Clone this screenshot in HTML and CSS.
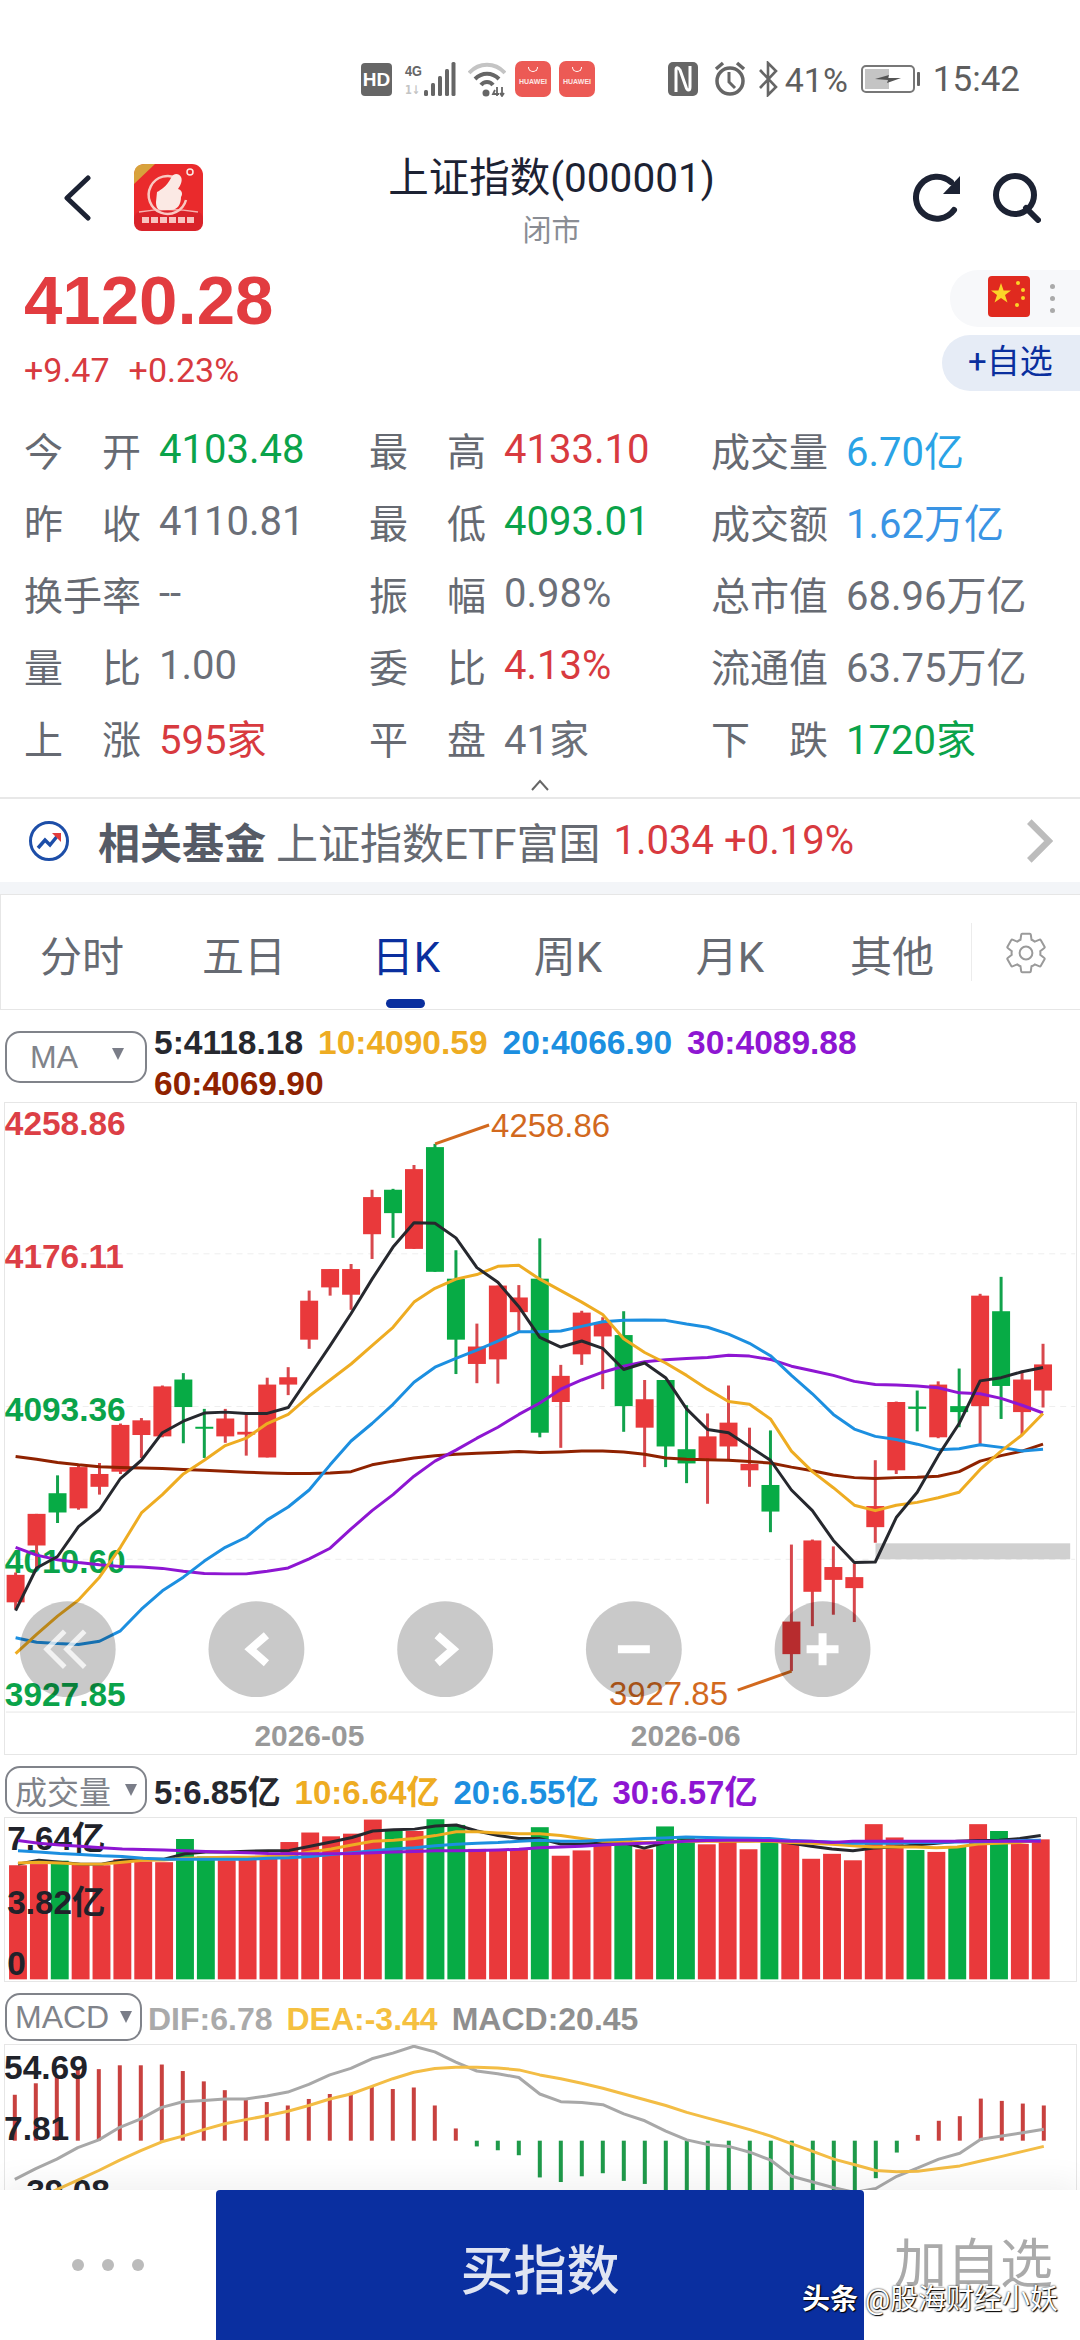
FILE: index.html
```html
<!DOCTYPE html>
<html lang="zh-CN">
<head>
    <meta charset="UTF-8">
    <meta name="viewport" content="width=device-width, initial-scale=1.0">
    <title>上证指数</title>
    <link rel="stylesheet" href="styles.css">
</head>
<body>
    <div class="status-bar">
        <span class="hd-badge">HD</span>
        <svg class="sb-signal" viewBox="0 0 52 36">
            <text x="1" y="15" class="sb-4g" textLength="17" lengthAdjust="spacingAndGlyphs">4G</text>
            <text x="1" y="33" class="sb-1" textLength="15" lengthAdjust="spacingAndGlyphs">1↓</text>
            <rect x="20" y="29" width="4" height="6" rx="1.500" fill="#666"/><rect x="27" y="22" width="4" height="13" rx="1.500" fill="#666"/>
            <rect x="34" y="15" width="4" height="20" rx="1.500" fill="#666"/><rect x="41" y="8" width="4" height="27" rx="1.500" fill="#666"/><rect x="47.500" y="1" width="4" height="34" rx="1.500" fill="#666"/>
        </svg>
        <svg class="sb-wifi" viewBox="0 0 38 36" fill="none">
            <path d="M1 12C11 1 27 1 37 12" stroke="#c4c4c4" stroke-width="4"/>
            <path d="M7 18C14 11 24 11 31 18" stroke="#666" stroke-width="4"/>
            <path d="M13 24C16 20 22 20 25 24" stroke="#666" stroke-width="4"/>
            <circle cx="18" cy="32" r="3.500" fill="#666"/>
            <path d="M27 29L25 33H31M29 26V35M34 26V35M32 32L34 35L36 32" stroke="#666" stroke-width="1.800"/>
        </svg>
        <span class="hw-icon"><i></i>HUAWEI</span>
        <span class="hw-icon hw-icon-second"><i></i>HUAWEI</span>
        <svg class="sb-nfc" viewBox="0 0 32 36" fill="none">
            <rect x="1" y="1" width="30" height="34" rx="5" fill="#666"/>
            <path d="M9 31V9C9 6 11 6 13 9L19 26C20 30 23 30 23 26V5" stroke="#fff" stroke-width="3"/>
        </svg>
        <svg class="sb-alarm" viewBox="0 0 34 36" fill="none" stroke="#666">
            <circle cx="17" cy="20" r="13" stroke-width="3.500"/>
            <path d="M16 11v10l6 6" stroke-width="3"/>
            <path d="M3 8L10 2M31 8L24 2" stroke-width="3.500"/>
        </svg>
        <svg class="sb-bt" viewBox="0 0 20 36" fill="none">
            <path d="M2 9L18 26L10 34V2L18 10L2 27" stroke="#666" stroke-width="2.600"/>
        </svg>
        <span class="sb-text sb-percent">41%</span>
        <svg class="sb-battery" viewBox="0 0 60 28" fill="none">
            <rect x="1" y="1" width="52" height="26" rx="4" stroke="#777" stroke-width="2"/>
            <rect x="4" y="4" width="24" height="20" fill="#c4c4c4"/>
            <path d="M14 14L28 10L27 13H40L26 18L27 15Z" fill="#555"/>
            <rect x="56" y="7" width="3" height="14" rx="1" fill="#666"/>
        </svg>
        <span class="sb-text sb-time">15:42</span>
    </div>

    <header class="top-bar">
        <div class="top-left">
            <svg class="back-icon" viewBox="0 0 30 46" fill="none"><path d="M26 3L5 23L26 43" stroke="#1c2233" stroke-width="5" stroke-linecap="round" stroke-linejoin="round"/></svg>
            <svg class="app-logo" viewBox="0 0 69 67">
                <rect width="69" height="67" rx="11" fill="#ea2a2c"/>
                <rect y="47" width="69" height="20" rx="8" fill="#d9232a"/>
                <path d="M5 48Q34 43 64 48" fill="none" stroke="#f6b0ae" stroke-width="1.500"/>
                <path d="M0 20V11Q0 0 11 0H21Z" fill="#d8a23c"/>
                <path d="M44 15A19 19 0 1 0 52 36" fill="none" stroke="#f9c9c2" stroke-width="2.500"/>
                <path d="M23 28C27 26 33 22 37 14C39 9 45 9 47 13C49 17 46 22 44 25C48 26 49 30 47 33C47 40 44 46 36 46H27C23 46 22 42 22 38Z" fill="#fbe9e4"/>
                <circle cx="56" cy="8" r="3" fill="none" stroke="#fbe9e4" stroke-width="1.500"/>
                <path d="M8 56H61" stroke="#f8c4c0" stroke-width="6" stroke-dasharray="7 2"/>
            </svg>
        </div>
        <div class="top-title">
            <h1>上证指数(000001)</h1>
            <p>闭市</p>
        </div>
        <div class="top-right">
            <svg class="refresh-icon" viewBox="0 0 50 50" fill="none">
                <path d="M41 37A21 21 0 1 1 38 9" stroke="#1c2233" stroke-width="6" stroke-linecap="round"/>
                <path d="M47 3V21H30Z" fill="#1c2233"/>
            </svg>
            <svg class="search-icon" viewBox="0 0 48 50" fill="none">
                <circle cx="22" cy="22" r="19" stroke="#1c2233" stroke-width="6"/>
                <path d="M33 35L45 47" stroke="#1c2233" stroke-width="6" stroke-linecap="round"/>
            </svg>
        </div>
    </header>

    <section class="price-row">
        <div class="price-main">
            <div class="price">4120.28</div>
            <div class="price-change"><span>+9.47</span><span>+0.23%</span></div>
        </div>
        <div class="price-side">
            <div class="flag-pill">
                <svg class="flag" viewBox="0 0 42 41">
                    <rect width="42" height="41" rx="4" fill="#e02a1f"/>
                    <polygon points="13,7 15.600,14.500 23,14.500 17,19 19.500,26.500 13,22 6.500,26.500 9,19 3,14.500 10.400,14.500" fill="#fbd428"/>
                    <circle cx="30" cy="7" r="2" fill="#fbd428"/><circle cx="35" cy="14" r="2" fill="#fbd428"/>
                    <circle cx="35" cy="22" r="2" fill="#fbd428"/><circle cx="29" cy="29" r="2" fill="#fbd428"/>
                </svg>
                <span class="flag-dots"><i></i><i></i><i></i></span>
            </div>
            <div class="follow-pill">+自选</div>
        </div>
    </section>

    <section class="stats">
        <div class="stat"><label>今开</label><b class="green">4103.48</b></div>
        <div class="stat"><label>最高</label><b class="red">4133.10</b></div>
        <div class="stat"><label>成交量</label><b class="sky">6.70亿</b></div>
        <div class="stat"><label>昨收</label><b>4110.81</b></div>
        <div class="stat"><label>最低</label><b class="green">4093.01</b></div>
        <div class="stat"><label>成交额</label><b class="azure">1.62万亿</b></div>
        <div class="stat"><label>换手率</label><b>--</b></div>
        <div class="stat"><label>振幅</label><b>0.98%</b></div>
        <div class="stat"><label>总市值</label><b>68.96万亿</b></div>
        <div class="stat"><label>量比</label><b>1.00</b></div>
        <div class="stat"><label>委比</label><b class="red">4.13%</b></div>
        <div class="stat"><label>流通值</label><b>63.75万亿</b></div>
        <div class="stat"><label>上涨</label><b class="red">595家</b></div>
        <div class="stat"><label>平盘</label><b>41家</b></div>
        <div class="stat"><label>下跌</label><b class="green">1720家</b></div>
    </section>

    <div class="collapse">
        <svg viewBox="0 0 20 12" fill="none"><path d="M2 11L10 2L18 11" stroke="#666" stroke-width="2"/></svg>
    </div>

    <section class="fund-row">
        <svg class="fund-icon" viewBox="0 0 42 42" fill="none">
            <circle cx="21" cy="21" r="18.500" stroke="#1d4ea8" stroke-width="3"/>
            <path d="M10 28L17 20L22 25L31 14" stroke="#1d4ea8" stroke-width="3.500"/>
            <path d="M24 13H33V22Z" fill="#e23b3b"/>
        </svg>
        <strong>相关基金</strong>
        <span class="fund-name">上证指数ETF富国</span>
        <span class="fund-price">1.034 +0.19%</span>
        <svg class="fund-arrow" viewBox="0 0 26 40" fill="none"><path d="M4 2L22 20L4 38" stroke="#bcbcbc" stroke-width="6"/></svg>
    </section>
    <div class="strip"></div>

    <nav class="tabs">
        <div class="tab-list">
            <a>分时</a>
            <a>五日</a>
            <a class="active">日K</a>
            <a>周K</a>
            <a>月K</a>
            <a>其他</a>
        </div>
        <div class="tab-gear">
            <svg viewBox="0 0 24 24" fill="none" stroke="#9a9a9a" stroke-width="1">
                <path d="M19.140 12.940c.04-.3.06-.61.06-.94 0-.32-.02-.64-.07-.94l2.030-1.580c.18-.14.23-.41.12-.61l-1.920-3.320c-.12-.22-.37-.29-.59-.22l-2.390.96c-.5-.38-1.030-.7-1.620-.94l-.36-2.540c-.04-.24-.24-.41-.48-.41h-3.840c-.24 0-.43.17-.47.41l-.36 2.540c-.59.24-1.130.57-1.620.94l-2.390-.96c-.22-.08-.47 0-.59.22L2.740 8.870c-.12.21-.08.47.12.61l2.030 1.580c-.05.3-.09.63-.09.94s.02.64.07.94l-2.030 1.580c-.18.14-.23.41-.12.61l1.920 3.320c.12.22.37.29.59.22l2.390-.96c.5.38 1.030.7 1.620.94l.36 2.540c.05.24.24.41.48.41h3.840c.24 0 .44-.17.47-.41l.36-2.540c.59-.24 1.130-.56 1.620-.94l2.390.96c.22.08.47 0 .59-.22l1.920-3.320c.12-.22.07-.47-.12-.61l-2.010-1.580z"/>
                <circle cx="12" cy="12" r="3.200"/>
            </svg>
        </div>
    </nav>

    <section class="chart-head chart-head-main">
        <div class="select-pill"><span>MA</span><i></i></div>
        <div class="legend legend-wrap">
            <span class="c-black">5:4118.18</span>
            <span class="c-orange">10:4090.59</span>
            <span class="c-blue">20:4066.90</span>
            <span class="c-purple">30:4089.88</span>
            <span class="c-brown">60:4069.90</span>
        </div>
    </section>
    <div class="panel panel-main"><svg id="kline" viewBox="5 0 1071 652"></svg></div>

    <section class="chart-head">
        <div class="select-pill"><span>成交量</span><i></i></div>
        <div class="legend">
            <span class="c-black">5:6.85亿</span>
            <span class="c-orange">10:6.64亿</span>
            <span class="c-blue">20:6.55亿</span>
            <span class="c-purple">30:6.57亿</span>
        </div>
    </section>
    <div class="panel panel-volume"><svg id="volume" viewBox="5 0 1071 164"></svg></div>

    <section class="chart-head chart-head-macd">
        <div class="select-pill select-macd"><span>MACD</span><i></i></div>
        <div class="legend legend-macd">
            <span class="c-dif">DIF:6.78</span>
            <span class="c-dea">DEA:-3.44</span>
            <span class="c-macd">MACD:20.45</span>
        </div>
    </section>
    <div class="panel panel-macd"><svg id="macd" viewBox="5 0 1071 145"></svg></div>

    <footer class="bottom-nav">
        <div class="more-dots"><i></i><i></i><i></i></div>
        <button class="buy-btn">买指数</button>
        <div class="add-btn">加自选</div>
    </footer>
    <div class="watermark"><b>头条</b> @股海财经小妖</div>

    <script src="chart.js"></script>
</body>
</html>
```

FILE: styles.css
```css
* {
    box-sizing: border-box;
}
html, body {
    margin: 0;
    padding: 0;
}
body {
    width: 1080px;
    height: 2340px;
    overflow: hidden;
    position: relative;
    background: #fff;
    font-family: Roboto, "Noto Sans CJK SC", sans-serif;
    color: #6b6f78;
}
h1, p {
    margin: 0;
    font-weight: 400;
}
svg {
    display: block;
}

/* status bar */
.status-bar {
    height: 150px;
    padding: 61px 60px 0 361px;
    display: flex;
    align-items: flex-start;
}
.hd-badge {
    width: 31px;
    height: 33px;
    margin-top: 2px;
    background: #666;
    border-radius: 4px;
    color: #fff;
    font: bold 19px/33px "Liberation Sans", sans-serif;
    text-align: center;
}
.sb-signal {
    width: 52px;
    height: 36px;
    margin-left: 12px;
}
.sb-4g {
    font: bold 15px "Liberation Sans", sans-serif;
    fill: #666;
}
.sb-1 {
    font: bold 12px "DejaVu Sans", sans-serif;
    fill: #c4c4c4;
}
.sb-wifi {
    width: 38px;
    height: 36px;
    margin-left: 12px;
}
.hw-icon {
    width: 36px;
    height: 36px;
    margin-left: 9px;
    padding-top: 16px;
    background: #ec5a55;
    border-radius: 7px;
    color: #fde6e4;
    font: bold 7px/10px "Liberation Sans", sans-serif;
    text-align: center;
    position: relative;
}
.hw-icon i {
    position: absolute;
    left: 13px;
    top: 6px;
    width: 10px;
    height: 5px;
    border: 1px solid #fff;
    border-top: none;
    border-radius: 0 0 6px 6px;
}
.hw-icon-second {
    margin-left: 8px;
}
.sb-nfc {
    width: 32px;
    height: 36px;
    margin-left: auto;
}
.sb-alarm {
    width: 34px;
    height: 36px;
    margin-left: 14px;
}
.sb-bt {
    width: 20px;
    height: 36px;
    margin-left: 11px;
}
.sb-text {
    color: #5e5e5e;
    line-height: 38px;
}
.sb-percent {
    font-size: 34px;
    margin-left: 7px;
}
.sb-battery {
    width: 60px;
    height: 28px;
    margin: 4px 0 0 13px;
}
.sb-time {
    font-size: 35px;
    margin-left: 12px;
}

/* header */
.top-bar {
    height: 112px;
    padding: 7px 39px 0 62px;
    display: grid;
    grid-template-columns: 1fr auto 1fr;
}
.top-left {
    display: flex;
    align-items: flex-start;
}
.back-icon {
    width: 30px;
    height: 46px;
    margin-top: 18px;
}
.app-logo {
    width: 69px;
    height: 67px;
    margin: 7px 0 0 42px;
}
.top-title {
    text-align: center;
}
.top-title h1 {
    font-size: 40.500px;
    line-height: 42px;
    color: #1c2233;
}
.top-title p {
    margin-top: 16px;
    font-size: 29px;
    line-height: 32px;
    color: #8a8d94;
}
.top-right {
    display: flex;
    justify-content: flex-end;
    align-items: flex-start;
    padding-top: 16px;
    gap: 30px;
}
.refresh-icon {
    width: 50px;
    height: 50px;
}
.search-icon {
    width: 48px;
    height: 50px;
}

/* price */
.price-row {
    height: 151px;
    padding-left: 24px;
    display: flex;
    justify-content: space-between;
}
.price {
    margin-top: 4px;
    font: bold 69px/70px "Liberation Sans", sans-serif;
    color: #e23c40;
}
.price-change {
    margin-top: 14px;
    display: flex;
    gap: 19px;
    font-size: 34px;
    line-height: 40px;
    color: #d83a3f;
}
.price-side {
    width: 138px;
    padding-top: 8px;
    display: flex;
    flex-direction: column;
    align-items: flex-end;
    gap: 8px;
}
.flag-pill {
    width: 130px;
    height: 57px;
    padding: 6px 0 0 38px;
    background: #f7f8fa;
    border-radius: 28px 0 0 28px;
    display: flex;
}
.flag {
    width: 42px;
    height: 41px;
}
.flag-dots {
    margin: 8px 0 0 20px;
    display: flex;
    flex-direction: column;
    gap: 7px;
}
.flag-dots i {
    width: 5px;
    height: 5px;
    background: #aaa;
    border-radius: 50%;
}
.follow-pill {
    width: 138px;
    height: 56px;
    padding-left: 26px;
    background: #e6ecf6;
    border-radius: 28px 0 0 28px;
    color: #0a2f9e;
    font-size: 33px;
    line-height: 54px;
}

/* quote table */
.stats {
    padding-left: 24px;
    display: grid;
    grid-template-columns: 345px 342px 1fr;
    grid-auto-rows: 72px;
}
.stat {
    display: flex;
    align-items: center;
    gap: 18px;
    font-size: 39px;
}
.stat label {
    width: 117px;
    text-align-last: justify;
    color: #666a72;
}
.stat b {
    font-weight: 400;
    font-size: 40px;
    white-space: nowrap;
}
.green {
    color: #0aa34a;
}
.red {
    color: #d83a3f;
}
.sky {
    color: #2aa3e6;
}
.azure {
    color: #3a94e4;
}

.collapse {
    height: 24px;
    display: flex;
    justify-content: center;
    align-items: center;
}
.collapse svg {
    width: 20px;
    height: 12px;
}

/* related fund */
.fund-row {
    height: 85px;
    padding-left: 28px;
    border-top: 2px solid #e8e8e8;
    display: flex;
    align-items: center;
    font-size: 42px;
    color: #666a72;
}
.fund-icon {
    width: 42px;
    height: 42px;
    margin-right: 28px;
}
.fund-row strong {
    color: #565b66;
    margin-right: 10px;
}
.fund-price {
    margin-left: 13px;
    font-size: 40px;
    color: #d83a3f;
}
.fund-arrow {
    width: 28px;
    height: 44px;
    margin-left: auto;
    margin-right: 27px;
}
.strip {
    height: 12px;
    background: #f3f5f8;
}

/* period tabs */
.tabs {
    height: 116px;
    border: 1px solid #e6e6e6;
    border-width: 1px 0 1px 1px;
    display: flex;
}
.tab-list {
    width: 971px;
    display: grid;
    grid-template-columns: repeat(6, 162px);
}
.tab-list a {
    padding-top: 29px;
    text-align: center;
    font-size: 42px;
    line-height: 68px;
    color: #666a72;
    position: relative;
}
.tab-list a.active {
    color: #0a2f9e;
}
.tab-list a.active::after {
    content: "";
    position: absolute;
    left: 61px;
    bottom: 1px;
    width: 39px;
    height: 9px;
    background: #0a2f9e;
    border-radius: 5px;
}
.tab-gear {
    flex: 1;
    margin: 28px 0 28px -1px;
    padding: 6px 0 0 30px;
    border-left: 1px solid #ececec;
}
.tab-gear svg {
    width: 48px;
    height: 48px;
}

/* chart headers */
.chart-head {
    height: 62px;
    padding: 11px 0 0 5px;
    display: flex;
    align-items: flex-start;
}
.chart-head-main {
    height: 92px;
    padding-top: 21px;
}
.select-pill {
    width: 142px;
    height: 48px;
    padding-left: 8px;
    border: 2px solid #80838a;
    border-radius: 15px;
    display: flex;
    align-items: center;
    justify-content: space-between;
    font-size: 32px;
    color: #80838a;
    flex-shrink: 0;
}
.chart-head-main .select-pill {
    height: 52px;
    padding-left: 23px;
}
.select-pill span {
    font-family: "Liberation Sans", "Noto Sans CJK SC", sans-serif;
}
.select-pill i {
    margin-right: 8px;
    border-left: 6px solid transparent;
    border-right: 6px solid transparent;
    border-top: 12px solid #7a7d88;
}
.chart-head-main .select-pill i {
    margin-right: 21px;
    margin-top: -6px;
}
.select-macd {
    width: 137px;
}
.legend {
    margin: 6px 0 0 7px;
    display: flex;
    flex-wrap: wrap;
    column-gap: 14px;
    font: bold 33px/41px "Liberation Sans", "Noto Sans CJK SC", sans-serif;
}
.legend-wrap {
    width: 730px;
    margin-top: -9px;
    column-gap: 15px;
    font-size: 33.500px;
}
.legend-macd {
    margin-left: 6px;
    font-size: 32px;
}
.c-black {
    color: #26282e;
}
.c-orange {
    color: #eeac22;
}
.c-blue {
    color: #1c8fe0;
}
.c-purple {
    color: #8e16d2;
}
.c-brown {
    color: #8f2200;
}
.c-dif {
    color: #aaaaaa;
}
.c-dea {
    color: #f5c040;
}
.c-macd {
    color: #8f8f8f;
}

/* chart panels */
.panel {
    margin: 0 3px 0 4px;
    border: 1px solid #e6e6e6;
    overflow: hidden;
}
.panel svg {
    width: 1071px;
    height: 100%;
}
.panel-main {
    height: 653px;
}
.panel-volume {
    height: 165px;
}
.panel-macd {
    height: 146px;
    border-bottom: none;
}
.axis-label {
    font: bold 33.500px "Liberation Sans", "Noto Sans CJK SC", sans-serif;
}
.extreme-label {
    font: 33px "Liberation Sans", sans-serif;
    fill: #d2691e;
}
.date-label {
    font: bold 30px "Liberation Sans", sans-serif;
    fill: #999;
    text-anchor: middle;
}

/* bottom nav */
.bottom-nav {
    height: 150px;
    display: flex;
    position: relative;
    background: #fff;
    box-shadow: 0 -8px 30px rgba(0, 0, 0, 0.06);
}
.more-dots {
    width: 216px;
    display: flex;
    justify-content: center;
    align-items: center;
    gap: 18px;
}
.more-dots i {
    width: 12px;
    height: 12px;
    background: #bbb;
    border-radius: 50%;
}
.buy-btn {
    width: 648px;
    padding-top: 4px;
    border: none;
    border-radius: 4px 4px 0 0;
    background: #0a2fa0;
    color: #dfe4f2;
    font-family: inherit;
    font-size: 53px;
    font-weight: 500;
}
.add-btn {
    flex: 1;
    padding: 40px 0 0 30px;
    font-size: 53px;
    color: #aaa;
    line-height: 70px;
}
.watermark {
    position: absolute;
    left: 802px;
    top: 2282px;
    color: #fff;
    font-size: 28px;
    line-height: 36px;
    white-space: nowrap;
    text-shadow: 0 0 2px #000, 1px 1px 1px #000;
}
```

FILE: chart.js
```js
// Daily k-line data, as drawn. y values are raw sample rows, scaled to panel px below.
// [wickTop, bodyTop, bodyBottom, wickBottom, up]
const CANDLES = [
    [1205,1210,1270,1285,1],[1077,1077,1146,1195,1],[993,1032,1074,1097,0],[970,975,1065,1068,1],[966,990,1018,1035,1],
    [880,883,985,990,1],[868,873,905,955,1],[797,799,908,910,1],[770,784,844,923,0],[848,887,891,955,0],
    [848,869,908,922,1],[858,898,904,950,1],[780,795,954,954,1],[757,779,795,818,1],[590,612,697,717,1],
    [543,543,583,601,1],[532,543,599,632,1],[370,386,467,521,1],[368,370,421,475,0],[316,325,499,499,1],
    [270,277,549,549,0],[502,564,697,772,0],[662,712,750,792,1],[579,579,740,793,1],[578,605,637,680,1],
    [476,564,900,910,0],[752,776,833,933,1],[634,638,729,752,1],[648,660,690,805,1],[635,687,842,898,0],
    [785,827,889,975,1],[785,785,930,975,0],[840,936,967,1010,0],[858,908,957,1055,1],[797,878,930,958,1],
    [889,968,982,1018,1],[895,1014,1072,1117,0],[1144,1312,1383,1420,1],[1133,1135,1247,1322,1],[1148,1193,1221,1297,1],
    [1185,1215,1239,1313,1],[960,1060,1106,1140,1],[832,833,982,990,1],[808,843,848,897,0],[788,795,910,912,1],
    [760,842,855,888,0],[597,601,842,925,1],[560,635,798,870,0],[765,784,855,905,1],[706,751,808,845,1]
];

const MA = {
    '#8f2200': [952,958,965,970,974,976,977,978,980,982,984,986,988,989,989,988,985,970,962,955,950,947,945,943,941,943,942,940,940,942,947,955,958,959,960,963,966,975,983,992,998,1000,998,997,995,985,962,950,940,925],
    '#8e16d2': [1150,1167,1177,1183,1188,1192,1193,1196,1202,1207,1208,1208,1202,1195,1175,1152,1110,1070,1035,995,962,938,912,888,860,835,805,785,768,755,745,741,738,736,731,733,740,755,765,775,788,795,796,798,802,813,815,825,840,857],
    '#1c8fe0': [1347,1357,1360,1362,1355,1332,1285,1245,1215,1180,1150,1128,1090,1062,1025,970,918,880,838,790,757,738,720,700,680,680,678,668,658,655,654,655,663,670,685,705,732,775,815,860,892,908,915,925,937,935,926,932,940,936],
    '#eeac22': [1382,1340,1300,1265,1215,1150,1075,1035,990,960,928,912,880,860,820,785,750,710,670,615,585,565,555,537,535,565,590,615,642,695,725,748,775,805,832,838,870,940,985,1020,1058,1070,1058,1052,1042,1030,980,940,905,858],
    '#26282e': [1288,1195,1170,1105,1068,1000,960,900,875,857,855,858,858,845,778,710,640,565,495,442,443,475,540,572,625,692,713,700,716,762,748,780,848,893,900,930,960,1025,1070,1135,1183,1182,1085,1030,950,880,787,780,767,758]
};

const VOL_TOPS = [328,325,316,325,328,312,318,320,259,305,315,312,305,267,242,252,245,208,238,238,207,222,285,290,285,228,303,289,270,260,286,226,252,273,265,286,265,265,311,298,315,220,255,288,293,280,220,238,272,260];

const VOL_MA = {
    '#26282e': [325,315,320,325,325,315,312,312,298,293,293,291,290,289,278,267,255,238,235,233,225,222,238,250,258,258,272,272,270,268,283,268,263,263,264,264,262,270,278,285,290,283,280,275,270,265,263,262,258,250],
    '#eeac22': [322,320,322,325,325,320,315,314,310,308,307,307,305,302,293,285,275,265,262,258,250,240,240,243,245,245,250,258,265,265,268,268,265,265,265,265,265,268,270,273,277,280,280,280,282,280,272,270,268,262],
    '#1c8fe0': [290,293,297,300,303,305,310,312,312,312,312,312,310,308,305,300,295,290,285,282,277,273,270,268,265,262,265,265,262,260,258,256,254,255,256,257,258,262,265,267,270,270,270,268,268,267,266,265,263,262],
    '#8e16d2': [263,270,275,278,282,285,287,288,290,292,294,295,297,298,298,298,297,295,293,292,290,290,289,288,286,282,280,278,275,272,270,268,265,263,262,262,263,265,265,268,265,265,265,265,265,265,265,265,265,265]
};

const MACD_ZERO = 1047;
const MACD_BARS = [927,897,880,862,860,850,850,848,865,892,915,940,946,955,938,925,922,905,912,908,955,1015,1062,1072,1085,1143,1155,1140,1132,1152,1160,1180,1190,1190,1190,1190,1190,1190,1190,1190,1190,1145,1078,1032,995,983,937,943,950,955];
const DIF = [1148,1120,1095,1065,1045,1012,990,960,945,942,938,938,930,920,900,875,858,833,818,800,815,842,865,872,882,925,945,947,953,977,995,1022,1045,1057,1062,1077,1098,1140,1155,1170,1182,1172,1140,1118,1095,1080,1043,1035,1026,1017];
const DEA = [1220,1200,1175,1150,1125,1098,1073,1050,1035,1018,1003,992,982,970,955,938,925,905,885,868,858,855,855,857,862,875,885,897,910,925,940,955,973,988,1003,1018,1035,1055,1075,1095,1110,1125,1128,1127,1120,1113,1100,1088,1075,1062];

const RED = '#e9393b';
const GREEN = '#07ab45';
const slotX = i => 14.8 + 21 * i;
const kY = v => v / 2.178 - 83;
const volY = v => v / 2.613 - 78;
const macdY = v => v / 2.613 - 305;

function add(svg, tag, attrs, text) {
    const node = document.createElementNS('http://www.w3.org/2000/svg', tag);
    for (const key in attrs) node.setAttribute(key, attrs[key]);
    if (text) node.textContent = text;
    svg.appendChild(node);
    return node;
}

function line(svg, x1, y1, x2, y2, stroke, width) {
    return add(svg, 'line', { x1, y1, x2, y2, stroke, 'stroke-width': width });
}

function polyline(svg, values, toY, stroke, width) {
    const points = values.map((v, i) => slotX(i).toFixed(1) + ',' + toY(v).toFixed(1)).join(' ');
    add(svg, 'polyline', { points, stroke, fill: 'none', 'stroke-width': width, 'stroke-linejoin': 'round' });
}

function label(svg, x, y, text, fill) {
    add(svg, 'text', { x, y, fill, class: 'axis-label' }, text);
}

function drawKline(svg) {
    [151, 304, 457].forEach(y => {
        add(svg, 'line', { x1: 5, y1: y, x2: 1076, y2: y, stroke: '#eeeeee', 'stroke-width': 1, 'stroke-dasharray': '6 5' });
    });
    line(svg, 5, 610, 1076, 610, '#e6e6e6', 1);

    label(svg, 4, 32, '4258.86', '#dc3f46');
    label(svg, 4, 165, '4176.11', '#dc3f46');
    label(svg, 4, 318, '4093.36', '#0aa34a');
    label(svg, 4, 471, '4010.60', '#0aa34a');
    label(svg, 4, 604, '3927.85', '#0aa34a');

    add(svg, 'rect', { x: 876, y: 441, width: 195, height: 16, fill: '#d0d0d0' });

    CANDLES.forEach((c, i) => {
        const x = slotX(i);
        const color = c[4] ? RED : GREEN;
        line(svg, x, kY(c[0]), x, kY(c[3]), c[4] ? '#d8484d' : '#12a24c', 3);
        add(svg, 'rect', { x: x - 9, y: kY(c[1]), width: 18, height: Math.max(2, kY(c[2]) - kY(c[1])), fill: color });
    });

    for (const color in MA) polyline(svg, MA[color], kY, color, 3);

    // high and low markers
    add(svg, 'polyline', { points: '435,41 489,22', fill: 'none', stroke: '#d2691e', 'stroke-width': 3 });
    add(svg, 'text', { x: 491, y: 34, class: 'extreme-label' }, '4258.86');
    add(svg, 'polyline', { points: '792,569 738,588', fill: 'none', stroke: '#d2691e', 'stroke-width': 3 });
    add(svg, 'text', { x: 609, y: 603, class: 'extreme-label' }, '3927.85');

    // zoom and pan buttons sit over the candles
    [67, 256, 445, 634, 823].forEach(cx => {
        add(svg, 'circle', { cx, cy: 547, r: 48, fill: 'rgba(0,0,0,0.21)' });
    });
    const icon = (d, width, opacity) => add(svg, 'path', { d, fill: 'none', stroke: '#fff', 'stroke-width': width, opacity });
    icon('M64 529L46 547L64 565M84 529L66 547L84 565', 5, 0.75);
    icon('M266 533L250 547L266 561', 8, 1);
    icon('M437 533L453 547L437 561', 8, 1);
    icon('M618 547H650', 8, 1);
    icon('M807 547H839M823 531V563', 8, 1);

    add(svg, 'text', { x: 309, y: 644, class: 'date-label' }, '2026-05');
    add(svg, 'text', { x: 686, y: 644, class: 'date-label' }, '2026-06');
}

function drawVolume(svg) {
    const bottom = volY(628);
    VOL_TOPS.forEach((top, i) => {
        const y = volY(top);
        add(svg, 'rect', { x: slotX(i) - 9, y, width: 18, height: bottom - y, fill: CANDLES[i][4] ? RED : GREEN });
    });
    label(svg, 4, 32, '7.64亿', '#20222a');
    label(svg, 4, 97, '3.82亿', '#20222a');
    label(svg, 4, 158, '0', '#20222a');
    for (const color in VOL_MA) polyline(svg, VOL_MA[color], volY, color, 3);
}

function drawMacd(svg) {
    const zero = macdY(MACD_ZERO);
    MACD_BARS.forEach((v, i) => {
        const y = macdY(v);
        const up = v < MACD_ZERO;
        add(svg, 'rect', {
            x: slotX(i) - 2, y: up ? y : zero, width: 4, height: Math.abs(y - zero),
            fill: up ? '#c8413f' : '#1f9a4a'
        });
    });
    label(svg, 4, 34, '54.69', '#20222a');
    label(svg, 4, 95, '7.81', '#20222a');
    label(svg, 15, 158, '-39.08', '#20222a');
    polyline(svg, DIF, macdY, '#a8a8a8', 3);
    polyline(svg, DEA, macdY, '#f3bd45', 3);
}

drawKline(document.getElementById('kline'));
drawVolume(document.getElementById('volume'));
drawMacd(document.getElementById('macd'));
```
